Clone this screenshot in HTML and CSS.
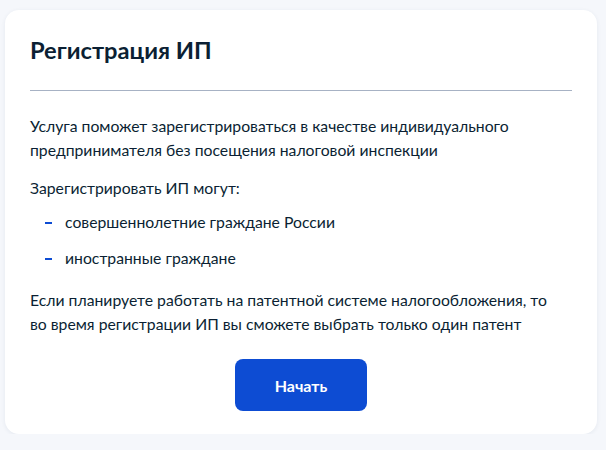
FILE: index.html
```html
<!DOCTYPE html>
<html lang="ru">
<head>
<meta charset="utf-8">
<link rel="stylesheet" href="styles.css">
</head>
<body>
<div class="card">
  <h1 class="title">Регистрация ИП</h1>
  <div class="divider"></div>
  <p class="text">Услуга поможет зарегистрироваться в качестве индивидуального предпринимателя без посещения налоговой инспекции</p>
  <p class="text lead">Зарегистрировать ИП могут:</p>
  <ul class="list">
    <li class="item"><span class="dash"></span>совершеннолетние граждане России</li>
    <li class="item"><span class="dash"></span>иностранные граждане</li>
  </ul>
  <p class="text">Если планируете работать на патентной системе налогообложения, то во время регистрации ИП вы сможете выбрать только один патент</p>
  <div class="actions">
    <button class="btn">Начать</button>
  </div>
</div>
</body>
</html>
```
FILE: styles.css
```css
html, body {
  margin: 0;
  padding: 0;
}
body {
  background: #f5f7fb;
  font-family: Lato, "Noto Sans", sans-serif;
  color: #0b1f33;
  padding: 10px 9px 0 5px;
}
.card {
  background: #ffffff;
  border-radius: 14px;
  box-shadow: 0 1px 4px rgba(40, 60, 100, 0.08);
  padding: 24px 25px 23px 25px;
  width: 542px;
}
.title {
  margin: 0;
  font-size: 23.7px;
  line-height: 32px;
  font-weight: 700;
}
.divider {
  height: 1px;
  background: #a7b2c4;
  margin: 24px 0 23px;
}
.text {
  margin: 0;
  padding-right: 14px;
  font-size: 15.75px;
  line-height: 24px;
}
.lead {
  margin-top: 14px;
}
.list {
  list-style: none;
  margin: 10px 0 18px;
  padding: 0 0 0 15px;
}
.item {
  display: flex;
  align-items: center;
  font-size: 15.75px;
  line-height: 24px;
  margin-bottom: 12px;
}
.dash {
  width: 7px;
  height: 2px;
  background: #0d4cd3;
  margin-right: 13px;
  margin-top: 2px;
}
.actions {
  display: flex;
  justify-content: center;
  margin-top: 23px;
}
.btn {
  width: 132px;
  height: 52px;
  border: none;
  border-radius: 8px;
  background: #0d4cd3;
  color: #ffffff;
  font-family: Lato, "Noto Sans", sans-serif;
  font-size: 16px;
  font-weight: 700;
}
```
